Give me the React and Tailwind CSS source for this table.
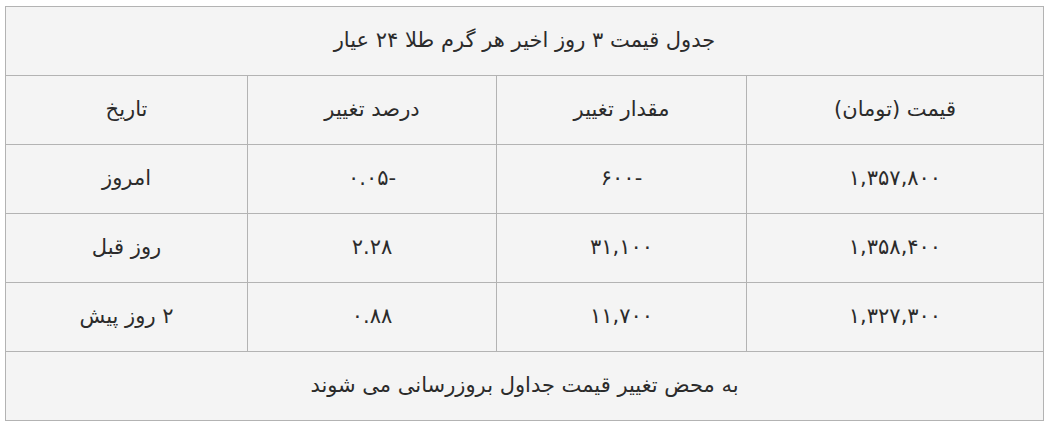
import React from 'react';

const rows = [
  { price: '۱,۳۵۷,۸۰۰', change: '-۶۰۰', percent: '-۰.۰۵', date: 'امروز' },
  { price: '۱,۳۵۸,۴۰۰', change: '۳۱,۱۰۰', percent: '۲.۲۸', date: 'روز قبل' },
  { price: '۱,۳۲۷,۳۰۰', change: '۱۱,۷۰۰', percent: '۰.۸۸', date: '۲ روز پیش' },
];

const cell = 'border border-[#b3b3b3] h-[69px] text-center align-middle';

const App = () => {
  return (
    <div className="bg-white w-[1051px] h-[428px] pt-[6px] pl-[5px]">
      <table
        dir="rtl"
        className="w-[1039px] border-collapse bg-[#f4f4f4] text-[#2b2b2b] text-[21px]"
        style={{ fontFamily: '"DejaVu Sans", sans-serif' }}
      >
        <tbody>
          <tr>
            <td colSpan={4} className={cell}>جدول قیمت ۳ روز اخیر هر گرم طلا ۲۴ عیار</td>
          </tr>
          <tr>
            <td className={`${cell} w-[297px]`}>قیمت (تومان)</td>
            <td className={`${cell} w-[250px]`}>مقدار تغییر</td>
            <td className={`${cell} w-[249px]`}>درصد تغییر</td>
            <td className={cell}>تاریخ</td>
          </tr>
          {rows.map((r) => (
            <tr key={r.date}>
              <td className={cell}>{r.price}</td>
              <td className={cell}>{r.change}</td>
              <td className={cell}>{r.percent}</td>
              <td className={cell}>{r.date}</td>
            </tr>
          ))}
          <tr>
            <td colSpan={4} className={cell}>به محض تغییر قیمت جداول بروزرسانی می شوند</td>
          </tr>
        </tbody>
      </table>
    </div>
  );
};

export default App;
